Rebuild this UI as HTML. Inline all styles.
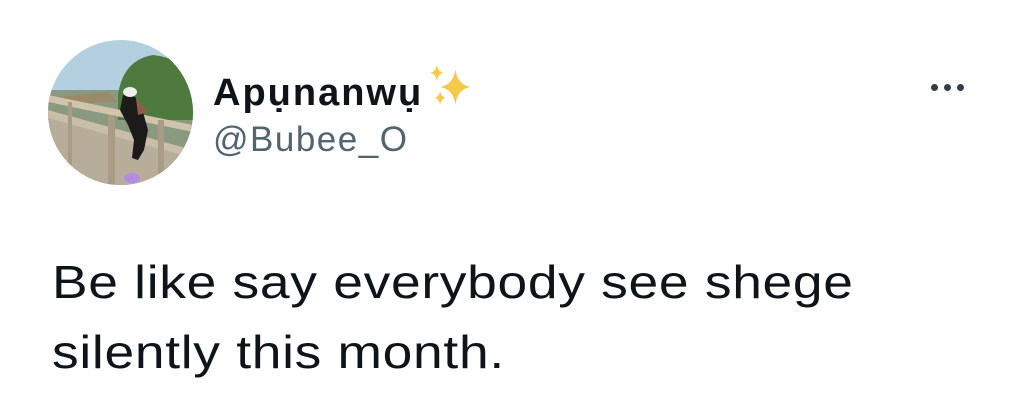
<!DOCTYPE html>
<html><head><meta charset="utf-8"><style>
html,body{margin:0;padding:0;background:#fff;width:1020px;height:420px;overflow:hidden;position:relative;font-family:"Liberation Sans",Arial,sans-serif;color:#0f1419}
.av{position:absolute;left:48px;top:40px;width:145px;height:145px;border-radius:50%;overflow:hidden}
.name{position:absolute;left:213px;top:63px;font-size:38px;font-weight:bold;letter-spacing:2px;line-height:48px;white-space:nowrap}
.handle{position:absolute;left:213px;top:118px;font-size:35px;color:#536471;line-height:44px;letter-spacing:1.5px}
.body{position:absolute;left:52px;top:247px;font-size:46px;line-height:70px;letter-spacing:0.6px;transform:scaleX(1.16);transform-origin:0 0;white-space:nowrap}
.dot{position:absolute;top:84px;width:7px;height:7px;border-radius:50%;background:#333d47}
</style></head><body>
<div class="av"><svg width="145" height="145" viewBox="0 0 145 145">
<rect width="145" height="145" fill="#b4cfe0"/>
<rect y="50" width="145" height="95" fill="#8a9a80"/>
<path d="M70 55 Q75 20 105 15 Q135 18 145 40 L145 80 L70 80Z" fill="#4e7a3e"/>
<path d="M0 58 L60 52 L70 62 L0 64Z" fill="#9a8a6a"/>
<path d="M0 75 L145 115 L145 145 L0 145Z" fill="#b7ad9a"/>
<path d="M0 55 L145 85 L145 92 L0 62Z" fill="#d0c4ac"/>
<path d="M0 70 L145 110 L145 118 L0 78Z" fill="#c9bea8"/>
<rect x="60" y="75" width="7" height="70" fill="#a89c84"/>
<rect x="110" y="80" width="6" height="65" fill="#a89c84"/>
<rect x="20" y="62" width="4" height="70" fill="#a89c84"/>
<path d="M75 55 Q82 52 88 58 L95 72 L100 90 L96 110 L90 120 L84 118 L86 100 L80 85 L72 70Z" fill="#1c1a1a"/>
<path d="M88 58 L100 72 L90 75Z" fill="#8a6048"/>
<ellipse cx="82" cy="52" rx="7" ry="5" fill="#eee"/>
<ellipse cx="84" cy="138" rx="8" ry="5" fill="#b48be0"/>
</svg></div>
<div class="name">Apụnanwụ<svg style="vertical-align:-6px;margin-left:4px" width="48" height="48" viewBox="0 0 44 44"><path d="M26 6 Q28 20 40 22 Q28 24 26 38 Q24 24 12 22 Q24 20 26 6Z" fill="#f7c948"/><path d="M9 2 Q10 8 15 9 Q10 10 9 16 Q8 10 3 9 Q8 8 9 2Z" fill="#f7c948"/><path d="M12 26 Q13 31 17 32 Q13 33 12 38 Q11 33 7 32 Q11 31 12 26Z" fill="#f7c948"/></svg></div>
<div class="handle">@Bubee_O</div>
<div class="dot" style="left:931px"></div><div class="dot" style="left:944px"></div><div class="dot" style="left:957px"></div>
<div class="body">Be like say everybody see shege<br>silently this month.</div>
</body></html>
